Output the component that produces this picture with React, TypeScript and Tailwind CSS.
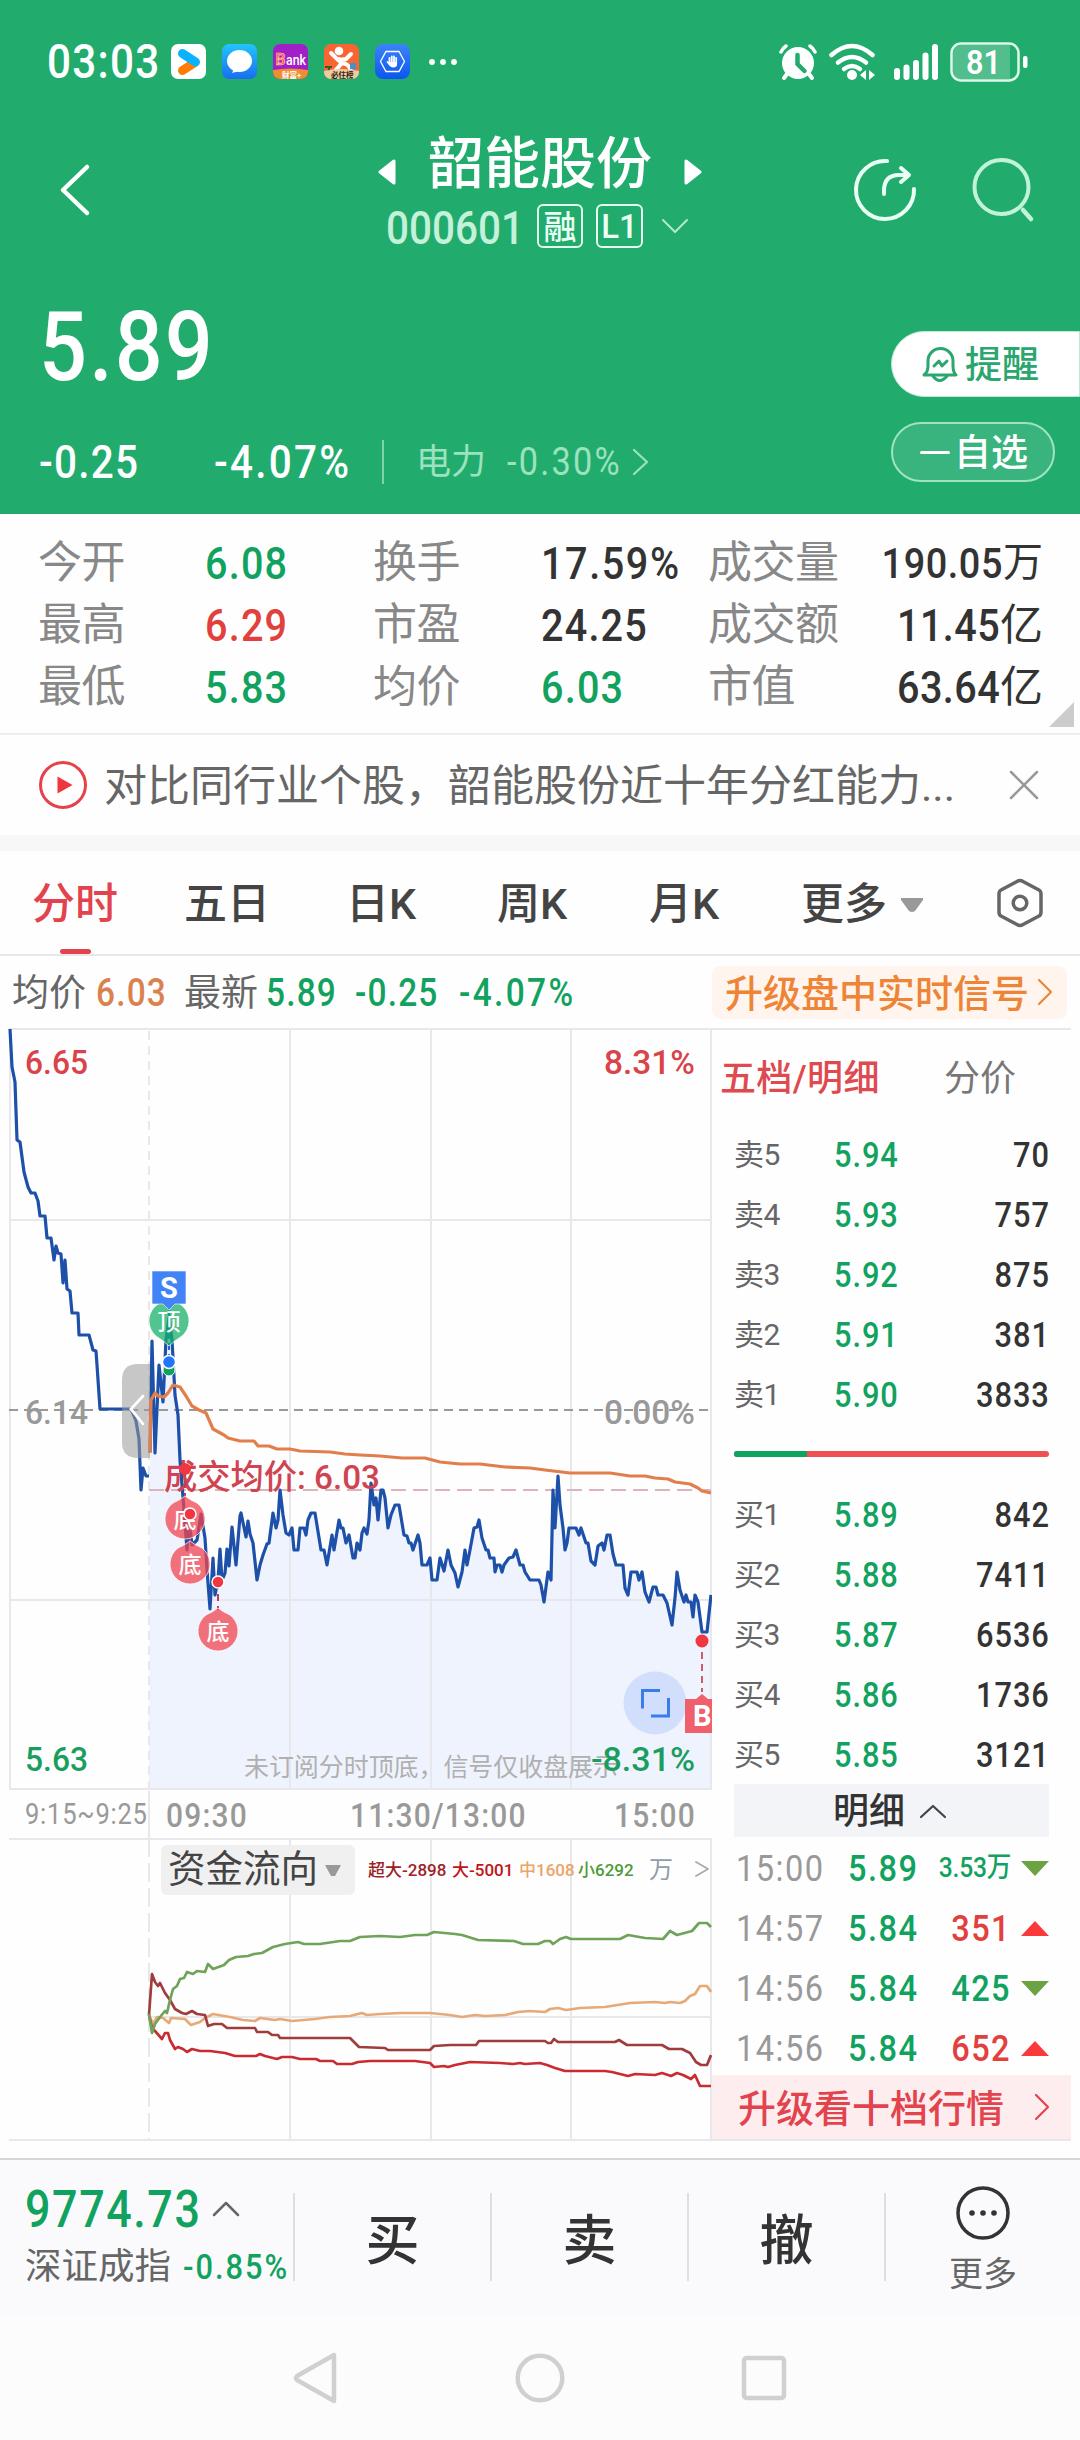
import React from "react";

const GREEN = "text-[#12a25f]";
const RED = "text-[#e2403d]";
const DARK = "text-[#333333]";

const NUM = "inline-block origin-left scale-x-[0.88] whitespace-nowrap";
const NUM_R = "inline-block origin-right scale-x-[0.88] whitespace-nowrap";

const AUCTION =
  "10,1029 12,1067 15,1082 17,1140 20,1142 24,1172 28,1187 31,1193 35,1193 38,1201 40,1216 45,1216 47,1238 51,1238 54,1260 56,1246 58,1253 61,1254 63,1283 65,1260 67,1289 70,1291 72,1313 78,1313 79,1335 89,1335 93,1350 96,1351 97,1365 100,1409 131,1409 136,1421 139,1439 141,1490 143,1468 146,1476 149,1476";

const PRICE =
  "150,1452 152,1341 155,1453 159,1365 163,1402 166,1340 169,1318 172,1340 175,1395 178,1415 180,1460 183,1497 187,1550 189,1520 192,1545 197,1540 201,1514 205,1538 207,1570 210,1609 213,1558 215,1595 218,1580 220,1549 222,1580 225,1573 227,1549 229,1566 232,1527 236,1565 240,1516 241,1513 246,1537 248,1521 250,1534 253,1543 257,1580 260,1565 263,1555 267,1544 269,1543 273,1513 276,1528 278,1520 280,1490 283,1515 286,1533 289,1535 292,1528 294,1550 298,1550 300,1528 304,1528 306,1535 308,1520 311,1513 315,1513 321,1550 324,1550 327,1565 332,1535 334,1550 339,1520 341,1528 343,1528 346,1543 349,1535 353,1558 355,1558 357,1543 360,1550 362,1533 364,1528 367,1534 369,1520 371,1483 374,1505 376,1498 378,1520 381,1490 383,1490 385,1498 388,1528 391,1515 395,1505 399,1505 404,1535 407,1536 409,1543 411,1543 413,1550 418,1535 420,1543 422,1565 427,1565 430,1558 432,1580 437,1580 440,1558 444,1571 448,1550 451,1565 455,1573 458,1587 462,1572 465,1550 467,1565 470,1550 474,1528 477,1527 479,1520 482,1538 486,1550 488,1550 490,1558 494,1558 495,1572 497,1565 500,1565 502,1572 504,1565 509,1558 513,1557 516,1550 520,1565 523,1565 525,1572 530,1580 539,1580 541,1585 544,1602 548,1572 551,1580 553,1490 555,1528 558,1476 560,1505 563,1528 565,1550 567,1543 569,1528 576,1528 579,1535 581,1528 586,1543 588,1543 591,1561 595,1565 598,1546 602,1543 604,1550 607,1535 610,1535 613,1554 616,1565 623,1565 625,1588 628,1595 631,1572 637,1572 639,1580 642,1572 645,1592 649,1602 653,1587 656,1587 658,1595 663,1595 667,1603 672,1625 675,1598 677,1572 680,1590 684,1602 686,1595 688,1602 691,1602 693,1617 695,1595 698,1602 702,1632 707,1632 711,1595";

const AVERAGE =
  "150,1453 151,1400 155,1393 158,1396 164,1397 168,1393 173,1385 180,1387 186,1396 192,1406 199,1410 206,1413 213,1429 224,1435 228,1438 240,1441 254,1441 258,1446 269,1446 277,1449 290,1449 300,1451 330,1452 345,1454 360,1455 380,1456 402,1458 425,1458 440,1462 460,1464 480,1464 505,1467 530,1468 545,1470 570,1473 610,1473 630,1476 645,1476 655,1478 668,1479 675,1482 690,1484 698,1488 702,1491 711,1493";

const FLOW_SMALL =
  "149,2014 152,2033 155,2024 160,2017 165,2011 167,2013 170,2000 173,1989 177,1986 180,1979 184,1978 187,1972 193,1974 197,1971 205,1972 208,1964 213,1969 224,1965 229,1960 236,1957 248,1956 254,1954 262,1953 273,1947 285,1944 298,1942 304,1944 320,1944 340,1941 350,1941 360,1937 380,1936 400,1937 415,1935 427,1935 434,1932 455,1934 462,1935 478,1940 514,1941 523,1944 538,1944 545,1941 550,1941 553,1944 560,1939 566,1937 571,1939 620,1939 628,1935 645,1938 663,1939 670,1931 677,1935 692,1931 699,1923 707,1923 711,1927";

const FLOW_MEDIUM =
  "149,2015 153,2024 157,2017 163,2018 169,2023 171,2018 185,2019 191,2025 200,2022 205,2018 213,2014 230,2017 243,2020 255,2021 260,2018 275,2020 280,2019 292,2021 315,2019 330,2017 350,2016 362,2013 367,2015 380,2014 400,2013 430,2013 450,2015 462,2017 475,2015 485,2016 505,2015 518,2012 530,2011 545,2012 550,2009 558,2008 566,2010 580,2008 605,2007 630,2003 655,2002 665,2003 670,2002 680,2003 685,2001 690,1996 695,1994 700,1986 707,1986 711,1992";

const FLOW_HUGE =
  "149,2015 152,1974 155,1982 158,1986 160,1983 165,1993 170,2000 175,2009 182,2013 186,2014 192,2011 197,2014 205,2015 208,2026 214,2024 222,2024 227,2028 255,2028 257,2032 268,2032 272,2035 278,2035 280,2038 350,2038 354,2042 359,2047 385,2048 388,2050 430,2050 434,2046 450,2045 476,2045 479,2041 545,2041 548,2043 551,2043 554,2039 558,2042 615,2042 619,2040 627,2045 662,2045 669,2049 682,2049 690,2053 696,2062 701,2065 707,2065 711,2055";

const FLOW_BIG =
  "149,2015 152,2028 155,2031 162,2039 165,2033 168,2033 170,2040 175,2049 178,2047 183,2049 187,2052 192,2049 200,2051 210,2051 225,2053 235,2056 256,2056 260,2054 265,2056 277,2059 282,2057 292,2057 300,2059 316,2059 320,2061 333,2061 337,2064 352,2064 358,2062 370,2061 415,2061 430,2063 434,2067 444,2066 448,2067 455,2065 470,2062 500,2063 513,2064 520,2063 525,2064 540,2063 547,2065 555,2068 565,2071 605,2071 612,2072 628,2076 635,2074 655,2075 662,2073 671,2076 677,2073 683,2075 691,2079 695,2075 700,2086 711,2086";

function Chevron({ w, h, d, stroke, sw = 2.5, className = "" }: { w: number; h: number; d: string; stroke: string; sw?: number; className?: string }) {
  return (
    <svg width={w} height={h} viewBox={`0 0 ${w} ${h}`} fill="none" className={`shrink-0 ${className}`}>
      <path d={d} stroke={stroke} strokeWidth={sw} strokeLinecap="round" strokeLinejoin="round" />
    </svg>
  );
}

function StatusBar() {
  return (
    <div className="flex h-[123px] items-center pl-[47px] pr-[52px]">
      <span className="w-[124px]">
        <span className={`${NUM} text-[48px] leading-none tracking-[0.03em]`}>03:03</span>
      </span>
      <div className="flex gap-4">
        <svg width="35" height="35" viewBox="0 0 35 35">
          <rect width="35" height="35" rx="7" fill="#fff" />
          <path d="M11.5 26.5 23 19" stroke="#ff7d05" strokeWidth="9" strokeLinecap="round" />
          <path d="M11.5 9.500 24.500 18" stroke="#0bb3fb" strokeWidth="9" strokeLinecap="round" />
        </svg>
        <svg width="35" height="35" viewBox="0 0 35 35">
          <defs>
            <linearGradient id="msg" x1="0" y1="0" x2="0" y2="1">
              <stop offset="0" stopColor="#23c5fc" />
              <stop offset="1" stopColor="#1a6df0" />
            </linearGradient>
          </defs>
          <rect width="35" height="35" rx="7" fill="url(#msg)" />
          <ellipse cx="17.500" cy="17" rx="12.500" ry="11" fill="#fff" />
          <path d="m12 25-2 4 7-2z" fill="#fff" />
        </svg>
        <svg width="35" height="35" viewBox="0 0 35 35">
          <defs>
            <clipPath id="bankclip">
              <rect width="35" height="35" rx="7" />
            </clipPath>
          </defs>
          <g clipPath="url(#bankclip)">
            <rect width="35" height="35" fill="#a01fc8" />
            <path d="M0 26q17-3 35 0v9H0z" fill="#f08c32" />
            <text x="2.500" y="21" fontSize="17" fontWeight="700" fill="#ff5a4a" stroke="#ffd2b8" strokeWidth=".6" textLength="10" lengthAdjust="spacingAndGlyphs">B</text>
            <text x="13" y="21" fontSize="14" fontWeight="500" fill="#fff" textLength="20" lengthAdjust="spacingAndGlyphs">ank</text>
            <text x="9" y="33.500" fontSize="7.500" fontWeight="700" fill="#fff">财富+</text>
          </g>
        </svg>
        <svg width="35" height="35" viewBox="0 0 35 35">
          <defs>
            <clipPath id="lifeclip">
              <rect width="35" height="35" rx="7" />
            </clipPath>
          </defs>
          <g clipPath="url(#lifeclip)">
            <rect width="35" height="35" fill="#fa6432" />
            <circle cx="15" cy="7" r="4.300" fill="#fff" />
            <path d="m7 9 7 7 8-1 5-5M15 15l2 5-6 7M17 19q8 0 10 8" stroke="#fff" strokeWidth="4" fill="none" strokeLinecap="round" />
            <rect x="26" y="19" width="6" height="6" fill="#4a90c8" />
            <path d="M1 23h7M5 23v5" stroke="#3b5a2a" strokeWidth="2" />
            <path d="M0 27q17-4 35 0v8H0z" fill="#e9cda4" />
            <text x="7" y="33.500" fontSize="7.500" fontWeight="700" fill="#3a1a10">必住榜</text>
          </g>
        </svg>
        <svg width="35" height="35" viewBox="0 0 35 35">
          <defs>
            <linearGradient id="hand" x1="0" y1="0" x2="0" y2="1">
              <stop offset="0" stopColor="#3c84f8" />
              <stop offset="1" stopColor="#0d55f0" />
            </linearGradient>
          </defs>
          <rect width="35" height="35" rx="8" fill="url(#hand)" />
          <path d="m11 7.500h13l5.500 10-5.500 10H11l-5.500-10z" fill="none" stroke="#fff" strokeWidth="1.300" />
          <path d="M14.500 14v6M16.800 12.500v8M19 12.500v8M21.200 14v6M12.500 18l3 3.500q3 2 5.500 0" stroke="#fff" strokeWidth="1.800" strokeLinecap="round" fill="none" />
          <path d="M14 18h8v3q-3 3-6 1z" fill="#fff" />
        </svg>
      </div>
      <svg width="30" height="8" viewBox="0 0 30 8" className="ml-[18px]" fill="#fff">
        <circle cx="4" cy="4" r="2.900" />
        <circle cx="15" cy="4" r="2.900" />
        <circle cx="26" cy="4" r="2.900" />
      </svg>
      <div className="ml-auto flex items-center">
        <svg width="38" height="38" viewBox="0 0 38 38" fill="none" stroke="#fff" strokeLinecap="round">
          <path d="M2 9q2-4 5-6M36 9q-2-4-5-6" strokeWidth="3.500" />
          <circle cx="19" cy="20" r="16" fill="#fff" stroke="none" />
          <path d="m8 31-3 4M30 31l3 4" strokeWidth="4" />
          <path d="M18.500 12v9l7 7" stroke="#21ac6e" strokeWidth="4.500" />
        </svg>
        <svg width="46" height="38" viewBox="0 0 46 38" fill="none" stroke="#fff" strokeLinecap="round" className="ml-[12px]">
          <path d="M2.500 12q20.500-18 41 0" strokeWidth="4.500" />
          <path d="M9 19.500q14-11 28 0" strokeWidth="4.500" />
          <path d="M15 26q8-6 16 0" strokeWidth="4.500" />
          <circle cx="23" cy="32" r="5" fill="#fff" stroke="none" />
          <path d="m31 32 6-5v10zM46 32l-6-5v10z" fill="#fff" stroke="none" />
        </svg>
        <svg width="45" height="36" viewBox="0 0 45 36" fill="#fff" className="ml-[19px]">
          <rect x="0" y="24" width="6" height="12" rx="3" />
          <rect x="9.500" y="20.500" width="6" height="15.500" rx="3" />
          <rect x="19" y="16" width="6" height="20" rx="3" />
          <rect x="28.500" y="8.500" width="6" height="27.500" rx="3" />
          <rect x="38" y="0" width="6" height="36" rx="3" />
        </svg>
        <svg width="78" height="40" viewBox="0 0 78 40" className="ml-[11px]">
          <path d="M60 3H12Q3 3 3 12v16q0 9 9 9h48z" fill="#52bd8d" />
          <rect x="1.500" y="1.500" width="67" height="37" rx="9.500" fill="none" stroke="#dff7ea" strokeWidth="2.500" />
          <rect x="73" y="14" width="4.500" height="12" rx="2" fill="#fff" />
          <text x="16" y="32" fontSize="34" fontWeight="600" fill="#fff" textLength="35" lengthAdjust="spacingAndGlyphs">81</text>
        </svg>
      </div>
    </div>
  );
}

function TitleBar() {
  return (
    <div className="flex h-[137px] items-start pl-[58px] pr-[44px]">
      <Chevron w={34} h={54} d="M29 4 5 27l24 23" stroke="#fff" sw={4.5} className="mt-[40px]" />
      <div className="ml-[286px] mt-[6px] flex w-[324px] flex-col">
        <div className="flex h-[66px] items-center justify-between">
          <svg width="18" height="26" viewBox="0 0 18 26" className="mt-[20px]">
            <path d="M16 2v22L2 13z" fill="#fff" stroke="#fff" strokeWidth="3" strokeLinejoin="round" />
          </svg>
          <h1 className="mt-[4px] text-[56px] font-medium leading-[66px] whitespace-nowrap">韶能股份</h1>
          <svg width="18" height="26" viewBox="0 0 18 26" className="mt-[20px]">
            <path d="M2 2v22l14-11z" fill="#fff" stroke="#fff" strokeWidth="3" strokeLinejoin="round" />
          </svg>
        </div>
        <div className="mt-[9px] flex h-[44px] items-center pl-[8px] text-[#ecfff5]">
          <span className="w-[151px]">
            <span className={`${NUM} mt-[4px] text-[46px] font-medium leading-none text-[#c5f0da]`}>000601</span>
          </span>
          <span className="flex h-[44px] w-[46px] items-center justify-center rounded-md border-2 border-[#e4fbef] pt-[3px] text-[33px] font-medium leading-none">融</span>
          <span className="ml-[13px] flex h-[44px] w-[47px] items-center justify-center rounded-md border-2 border-[#e4fbef] text-[33px] leading-none">L1</span>
          <Chevron w={28} h={16} d="m2 2 12 12L26 2" stroke="#b5e8cf" sw={2} className="ml-[18px]" />
        </div>
      </div>
      <div className="ml-auto mt-[34px] flex gap-[53px]">
        <svg width="66" height="66" viewBox="0 0 66 66" fill="none" stroke="#e9fff4" strokeWidth="4" strokeLinecap="round" strokeLinejoin="round">
          <path d="M34 4a29 29 0 1 0 27 28" />
          <path d="M31 37V34q0-16 15-16h9M48 11l8 7-8 7" />
        </svg>
        <svg width="64" height="66" viewBox="0 0 64 66" fill="none" stroke="#c0f3d8" strokeLinecap="round">
          <circle cx="29.500" cy="30" r="27" strokeWidth="4" />
          <path d="m51 53 8 9" strokeWidth="4.500" />
        </svg>
      </div>
    </div>
  );
}

function Header() {
  return (
    <header className="h-[514px] bg-[#21ac6e] font-medium text-white">
      <StatusBar />
      <TitleBar />
      <div className="flex h-[254px] justify-between pl-[39px]">
        <div>
          <div className="mt-[35px] h-[104px]">
            <span className={`${NUM} text-[96px] leading-[104px] tracking-[0.025em]`}>5.89</span>
          </div>
          <div className="mt-[41px] flex h-[44px] items-center leading-none">
            <span className="w-[175px]">
              <span className={`${NUM} text-[46px] tracking-[0.03em]`}>-0.25</span>
            </span>
            <span className="w-[168px]">
              <span className={`${NUM} text-[46px] tracking-[0.055em]`}>-4.07%</span>
            </span>
            <span className="h-[44px] w-[2px] bg-[#7fd3a8]" />
            <span className="ml-[32px] w-[91px] text-[35px] font-normal text-[#9ce2bf]">电力</span>
            <span className="w-[125px]">
              <span className={`${NUM} text-[39px] font-normal tracking-[0.065em] text-[#9ce2bf]`}>-0.30%</span>
            </span>
            <Chevron w={18} h={28} d="m2 2 13 12L2 26" stroke="#9ce2bf" sw={2.2} />
          </div>
        </div>
        <div className="flex w-[189px] flex-col pt-[71px]">
          <button className="flex h-[66px] items-center rounded-l-full border border-[#bfe9d3] bg-white pl-[30px] text-[36px] font-medium leading-none text-[#2ba66f]">
            <svg width="36" height="38" viewBox="0 0 36 38" fill="none" stroke="#2ba66f" strokeWidth="3" strokeLinecap="round" strokeLinejoin="round">
              <path d="M2 30q4-3 4-9v-5a12.500 12.500 0 0 1 25 0v5q0 6 3 9z" />
              <path d="M11 31q6.500 9 14 0" />
              <path d="m12 21 5-5 3 5 5-5" />
            </svg>
            <span className="ml-[7px] mt-[3px] text-[37px]">提醒</span>
          </button>
          <button className="mt-[25px] flex h-[60px] w-[164px] items-center rounded-full border-2 border-[#a0e3c2] bg-[#39b47e] pl-[27px] text-[37px] font-medium leading-none">
            <span className="h-[3px] w-[30px] rounded bg-white" />
            <span className="ml-[4px] mt-[3px]">自选</span>
          </button>
        </div>
      </div>
    </header>
  );
}

const STATS: [string, string, string, string, string, string, string, string, string][] = [
  ["今开", "6.08", GREEN, "换手", "17.59%", DARK, "成交量", "190.05", "万"],
  ["最高", "6.29", RED, "市盈", "24.25", DARK, "成交额", "11.45", "亿"],
  ["最低", "5.83", GREEN, "均价", "6.03", GREEN, "市值", "63.64", "亿"],
];

function Stats() {
  return (
    <section className="relative h-[221px] border-b-2 border-[#eeeeee] pt-[18px]">
      {STATS.map((r, i) => (
        <div key={r[0]} className="flex h-[62px] items-center pl-[38px] pr-[37px] text-[45px] font-medium leading-none tracking-[0.03em]">
          <span className="w-[167px] text-[44px] font-normal tracking-[-0.01em] text-[#888888]">{r[0]}</span>
          <span className="w-[168px]">
            <span className={`${NUM} ${r[2]}`}>{r[1]}</span>
          </span>
          <span className="w-[168px] text-[44px] font-normal tracking-[-0.01em] text-[#888888]">{r[3]}</span>
          <span className={`w-[167px] ${i === 0 ? "tracking-[0.04em]" : ""}`}>
            <span className={`${NUM} ${r[5]}`}>{r[4]}</span>
          </span>
          <span className="text-[44px] font-normal tracking-[-0.01em] text-[#888888]">{r[6]}</span>
          <span className={`ml-auto flex items-center whitespace-nowrap text-[#333333] ${i === 0 ? "text-[43px] tracking-[0.015em]" : "text-[45px] tracking-[0.01em]"}`}>
            <span className={NUM_R}>{r[7]}</span>
            <span className={`font-normal tracking-normal ${i === 0 ? "text-[40px]" : "text-[43px]"}`}>{r[8]}</span>
          </span>
        </div>
      ))}
      <svg width="25" height="25" viewBox="0 0 25 25" className="absolute bottom-[6px] right-[6px]">
        <path d="M25 0v25H0z" fill="#cccccc" />
      </svg>
    </section>
  );
}

function News() {
  return (
    <section className="flex h-[100px] items-center pl-[38px] pr-[41px]">
      <svg width="50" height="50" viewBox="0 0 50 50">
        <circle cx="25" cy="25" r="22.500" fill="none" stroke="#e5434c" strokeWidth="3" />
        <path d="M19.500 16.500v17l15-8.500z" fill="#ee3640" />
      </svg>
      <p className="ml-[16px] mt-[2px] whitespace-nowrap text-[43px] leading-none text-[#666666]">对比同行业个股，韶能股份近十年分红能力...</p>
      <Chevron w={30} h={30} d="M2 2l26 26M28 2 2 28" stroke="#999999" sw={2.5} className="ml-auto" />
    </section>
  );
}

function Tabs() {
  return (
    <nav className="relative flex h-[105px] items-center border-b-2 border-[#e8e8e8] pl-[32px] pt-[4px] text-[43px] font-medium leading-none text-[#444444]">
      <span className="w-[152px] text-[#e3434c]">分时</span>
      <span className="w-[162px]">五日</span>
      <span className="w-[151px]">日K</span>
      <span className="w-[152px]">周K</span>
      <span className="w-[152px]">月K</span>
      <span>更多</span>
      <svg width="22" height="14" viewBox="0 0 22 14" className="ml-[14px]">
        <path d="M0 0h22v2l-8 11q-3 2-6 0L0 2z" fill="#999999" />
      </svg>
      <svg width="48" height="50" viewBox="0 0 48 50" fill="none" stroke="#666666" strokeWidth="3.500" strokeLinejoin="round" className="mb-[4px] ml-[73px]">
        <path d="M21 3.500q3-2 6 0l16 8.500q2 1 2 4v18q0 3-2 4l-16 8.500q-3 2-6 0L5 38q-2-1-2-4V16q0-3 2-4z" />
        <circle cx="24" cy="25" r="6.800" />
      </svg>
      <span className="absolute bottom-0 left-[60px] h-[5px] w-[31px] rounded-full bg-[#e3434c]" />
    </nav>
  );
}

function QuoteLine() {
  return (
    <div className="flex h-[72px] items-center pl-[12px] pr-[13px] text-[38px] font-medium leading-none tracking-[0.035em]">
      <span className="mt-[2px] w-[84px] text-[37px] font-normal tracking-normal text-[#666666]">均价</span>
      <span className="mt-[2px] w-[88px]">
        <span className={`${NUM} text-[#d98250]`}>6.03</span>
      </span>
      <span className="mt-[2px] w-[82px] text-[37px] font-normal tracking-normal text-[#666666]">最新</span>
      <span className="mt-[2px] w-[89px]">
        <span className={`${NUM} ${GREEN}`}>5.89</span>
      </span>
      <span className="mt-[2px] w-[104px]">
        <span className={`${NUM} ${GREEN}`}>-0.25</span>
      </span>
      <span className="mt-[2px]">
        <span className={`${NUM} tracking-[0.07em] ${GREEN}`}>-4.07%</span>
      </span>
      <button className="ml-auto flex h-[53px] w-[355px] items-center rounded-lg bg-[#fff5ee] pl-[13px] text-[38px] font-medium leading-none tracking-normal text-[#ee8435]">
        <span className="mt-[3px] whitespace-nowrap">升级盘中实时信号</span>
        <Chevron w={18} h={28} d="m3 2 12 12L3 26" stroke="#ee8435" sw={2.2} className="ml-[7px]" />
      </button>
    </div>
  );
}

function Balloon({ x, y, up, fill, label }: { x: number; y: number; up?: boolean; fill: string; label: string }) {
  const d = up
    ? `M${x} ${y - 23}Q${x + 5} ${y - 19} ${x + 12} ${y - 16}A20 20 0 1 1 ${x - 12} ${y - 16}Q${x - 5} ${y - 19} ${x} ${y - 23}z`
    : `M${x} ${y + 25}Q${x - 5} ${y + 20} ${x - 13} ${y + 15}A20 20 0 1 1 ${x + 13} ${y + 15}Q${x + 5} ${y + 20} ${x} ${y + 25}z`;
  return (
    <g>
      <path d={d} fill={fill} fillOpacity="0.75" stroke="#fff" strokeOpacity="0.7" strokeWidth="1" />
      <text x={x} y={y + 8.5} fontSize="23" fontWeight="500" fill="#fff" textAnchor="middle">{label}</text>
    </g>
  );
}

function PriceChart() {
  return (
    <svg width="712" height="763" viewBox="0 1028 712 763" className="block">
      <polygon points={`149,1789 ${PRICE} 711,1789`} fill="#eff3fd" />
      <g stroke="#e8e8ec" strokeWidth="2" fill="none">
        <path d="M9 1029H712M10 1220H712M10 1600H712M9 1789H712M10 1029V1790M290 1029V1789M431 1029V1789M571 1029V1789M711 1029V1789" />
        <path d="M149 1031V1789" strokeDasharray="9 6" />
      </g>
      <path d="M9 1410H711" stroke="#999999" strokeWidth="2" strokeDasharray="9 6" />
      <path d="M149 1490H711" stroke="#dcb4ba" strokeWidth="2" strokeDasharray="15 7" />
      <polyline points={AUCTION} fill="none" stroke="#1d50a8" strokeWidth="3.200" strokeLinejoin="round" />
      <polyline points={PRICE} fill="none" stroke="#1d50a8" strokeWidth="3.200" strokeLinejoin="round" />
      <path d="M150 1364h-12q-16 0-16 16v62q0 16 16 16h12z" fill="#999999" fillOpacity="0.55" />
      <path d="m143 1396-12 13 12 15" fill="none" stroke="#fff" strokeWidth="2.800" strokeLinecap="round" />
      <polyline points={AVERAGE} fill="none" stroke="#e27d4c" strokeWidth="3.200" strokeLinejoin="round" />

      <g fontSize="34" fontWeight="500">
        <text x="25" y="1073.500" fill="#d9434a" textLength="63" lengthAdjust="spacingAndGlyphs">6.65</text>
        <text x="604" y="1073.500" fill="#d9434a" textLength="91" lengthAdjust="spacingAndGlyphs">8.31%</text>
        <text x="25" y="1424" fill="#999999" textLength="63" lengthAdjust="spacingAndGlyphs">6.14</text>
        <text x="604" y="1424" fill="#999999" textLength="91" lengthAdjust="spacingAndGlyphs">0.00%</text>
        <text x="25" y="1771" fill="#1a9e5f" textLength="63" lengthAdjust="spacingAndGlyphs">5.63</text>
      </g>
      <text x="244" y="1775.500" fontSize="25" fill="#b0b0b0" textLength="374">未订阅分时顶底，信号仅收盘展示</text>
      <text x="591" y="1771" fontSize="34" fontWeight="500" fill="#1a9e5f" textLength="104" lengthAdjust="spacingAndGlyphs">-8.31%</text>
      <text x="164" y="1488.500" fontSize="34" fontWeight="500" fill="#cf4450" textLength="216" lengthAdjust="spacingAndGlyphs">成交均价: 6.03</text>

      <path d="M169 1310v54" stroke="#1a63d8" strokeWidth="2" strokeDasharray="7 4" />
      <circle cx="169" cy="1370" r="6" fill="#12a25f" stroke="#fff" strokeWidth="1" />
      <Balloon x={169} y={1321} fill="#17b06a" label="顶" />
      <path d="M152 1271h34v33h-11l-6 6-6-6h-11z" fill="#4284f8" stroke="#fff" strokeOpacity="0.600" strokeWidth="1" />
      <text x="169" y="1298" fontSize="29" fontWeight="700" fill="#fff" textAnchor="middle">S</text>
      <circle cx="169" cy="1362" r="6.500" fill="#2176f5" stroke="#fff" strokeWidth="1.500" />

      <path d="M185 1469v28M190 1514v28M218 1582v28" stroke="#b3405e" strokeWidth="2" strokeDasharray="7 5" />
      <circle cx="185" cy="1469" r="6" fill="#f03640" />
      <Balloon x={185} y={1519} up fill="#f04450" label="底" />
      <circle cx="190" cy="1514" r="6" fill="#f03640" stroke="#fff" strokeWidth="1.500" />
      <Balloon x={190} y={1564} up fill="#f04450" label="底" />
      <Balloon x={218} y={1631} up fill="#f04450" label="底" />
      <circle cx="218" cy="1582" r="6" fill="#f03640" stroke="#fff" strokeWidth="1.500" />

      <circle cx="655" cy="1703" r="31.500" fill="#d1dffc" />
      <path d="M660 1690.500h-17.500v18M651 1716h17.500v-18" fill="none" stroke="#3a7cec" strokeWidth="3" />
      <circle cx="702" cy="1641" r="6.500" fill="#f03640" />
      <path d="M702 1652v40" stroke="#cc5c6c" strokeWidth="2" strokeDasharray="7 5" />
      <path d="M712 1699h-4l-6-5-6 5h-11v34h27z" fill="#f0606c" />
      <text x="693" y="1726" fontSize="29" fontWeight="700" fill="#fff">B</text>
    </svg>
  );
}

function FlowChart() {
  const lines: [string, string][] = [
    [FLOW_MEDIUM, "#e8a978"],
    [FLOW_HUGE, "#a03c3c"],
    [FLOW_BIG, "#c92c30"],
    [FLOW_SMALL, "#6fa359"],
  ];
  return (
    <div className="relative h-[302px]">
      <svg width="712" height="303" viewBox="0 1838 712 303" className="absolute left-0 top-0">
        <g stroke="#e8e8ec" strokeWidth="2" fill="none">
          <path d="M9 1839H712M149 2017H712M9 2140H712M290 1839V2140M431 1839V2140M571 1839V2140M711 1839V2140" />
          <path d="M149 1838V2140" strokeDasharray="19 6" />
        </g>
        {lines.map(([points, color]) => (
          <polyline key={color} points={points} fill="none" stroke={color} strokeWidth="2.700" strokeLinejoin="round" />
        ))}
      </svg>
      <div className="relative flex items-center pl-[161px] pt-[7px] text-[17px] font-medium leading-none">
        <button className="flex h-[50px] w-[194px] items-center rounded-md bg-[#f0f0f0] pl-[7px] text-[37.500px] font-normal leading-none text-[#444444]">
          资金流向
          <svg width="16" height="12" viewBox="0 0 16 12" className="ml-[7px] mt-[2px]">
            <path d="M0 0h16L10 11H6z" fill="#999999" />
          </svg>
        </button>
        <span className="ml-[13px] w-[84px] whitespace-nowrap text-[#9c2226]">超大-2898</span>
        <span className="w-[67px] whitespace-nowrap text-[#c01418]">大-5001</span>
        <span className="w-[59px] whitespace-nowrap text-[#eba468]">中1608</span>
        <span className="w-[71px] whitespace-nowrap text-[#4f9a36]">小6292</span>
        <span className="text-[24px] font-normal text-[#8c9eaf]">万</span>
        <Chevron w={16} h={18} d="M2 2 14 9 2 16" stroke="#aaaaaa" sw={1.8} className="mb-[3px] ml-[21px]" />
      </div>
    </div>
  );
}

const ASKS: [string, string, string][] = [
  ["卖5", "5.94", "70"],
  ["卖4", "5.93", "757"],
  ["卖3", "5.92", "875"],
  ["卖2", "5.91", "381"],
  ["卖1", "5.90", "3833"],
];
const BIDS: [string, string, string][] = [
  ["买1", "5.89", "842"],
  ["买2", "5.88", "7411"],
  ["买3", "5.87", "6536"],
  ["买4", "5.86", "1736"],
  ["买5", "5.85", "3121"],
];
const TICKS: [string, string, string, boolean][] = [
  ["15:00", "5.89", "3.53万", false],
  ["14:57", "5.84", "351", true],
  ["14:56", "5.84", "425", false],
  ["14:56", "5.84", "652", true],
];

function Level({ row }: { row: [string, string, string] }) {
  return (
    <div className="flex h-[60px] items-center pl-[22px] pr-[21px] text-[35px] font-medium leading-none tracking-[0.03em]">
      <span className="w-[100px] text-[30px] font-normal tracking-[-0.02em] text-[#666666]">{row[0]}</span>
      <span className={`${NUM} ${GREEN}`}>{row[1]}</span>
      <span className={`${NUM_R} ml-auto text-[#333333]`}>{row[2]}</span>
    </div>
  );
}

function OrderBook() {
  return (
    <aside className="flex h-[1113px] w-[359px] flex-col border-b-2 border-t-2 border-[#e8e8ec]">
      <div className="flex h-[95px] shrink-0 items-center pl-[8px] pt-[2px] text-[36px] leading-none">
        <span className="w-[224px] whitespace-nowrap font-medium tracking-[0.01em] text-[#de4a50]">五档/明细</span>
        <span className="text-[#777777]">分价</span>
      </div>
      <div className="shrink-0">
        {ASKS.map((r) => (
          <Level key={r[0]} row={r} />
        ))}
      </div>
      <div className="mx-[22px] mb-[28px] mt-[26px] flex h-[6px] shrink-0 overflow-hidden rounded-full bg-[#f05054]">
        <span className="w-[73px] bg-[#12a25f]" />
      </div>
      <div className="shrink-0">
        {BIDS.map((r) => (
          <Level key={r[0]} row={r} />
        ))}
      </div>
      <div className="mx-[22px] mt-[-1px] flex h-[53px] shrink-0 items-center bg-[#f3f4f8] pl-[99px] text-[36px] font-medium leading-none text-[#333333]">
        <span className="mt-[3px]">明细</span>
        <Chevron w={28} h={16} d="M2 14 14 3l12 11" stroke="#444444" sw={2.2} className="ml-[14px]" />
      </div>
      <div className="mt-[1px] shrink-0">
        {TICKS.map((t, i) => (
          <div key={i} className="flex h-[60px] items-center pl-[24px] pr-[22px] text-[37px] font-medium leading-none tracking-[0.045em]">
            <span className="w-[112px]">
              <span className={`${NUM} font-normal text-[#999999]`}>{t[0]}</span>
            </span>
            <span className={`${NUM} ${GREEN}`}>{t[1]}</span>
            <span className={`${NUM_R} ml-auto ${i === 0 ? "text-[28px] tracking-[-0.01em]" : ""} ${t[3] ? RED : GREEN}`}>{t[2]}</span>
            <svg width="28" height="15" viewBox="0 0 28 15" className="ml-[10px]">
              <path d={t[3] ? "M0 15h28L14 0z" : "M0 0h28L14 15z"} fill={t[3] ? "#fa3a3a" : "#6ba342"} />
            </svg>
          </div>
        ))}
      </div>
      <div className="mt-[-3px] flex h-[64px] shrink-0 items-center bg-[#feedef] pl-[26px] text-[38px] font-medium leading-none text-[#e3434c]">
        <span className="mt-[3px] whitespace-nowrap">升级看十档行情</span>
        <Chevron w={18} h={28} d="m3 2 12 12L3 26" stroke="#e3434c" sw={2.2} className="ml-[29px]" />
      </div>
    </aside>
  );
}

function BottomBar() {
  return (
    <footer>
      <div className="flex h-[158px] border-t-2 border-[#d6d6d8] bg-[#fafafc] leading-none">
        <div className="w-[293px] pl-[25px] pt-[23px]">
          <div className="flex h-[52px] items-center">
            <span className="w-[187px]">
              <span className={`${NUM} text-[51px] font-medium tracking-[0.035em] ${GREEN}`}>9774.73</span>
            </span>
            <Chevron w={28} h={16} d="M2 14 14 2l12 12" stroke="#666666" sw={2.5} />
          </div>
          <div className="mt-[11px] flex h-[42px] items-center whitespace-nowrap">
            <span className="w-[157px] shrink-0 text-[36.500px] text-[#666666]">深证成指</span>
            <span className={`${NUM} ml-[1px] text-[35px] font-medium tracking-[0.065em] ${GREEN}`}>-0.85%</span>
          </div>
        </div>
        {["买", "卖", "撤"].map((label) => (
          <React.Fragment key={label}>
            <span className="mt-[33px] h-[88px] w-[2px] bg-[#dedee2]" />
            <button className="w-[195px] pt-[7px] text-[54px] font-medium leading-none text-[#333333]">{label}</button>
          </React.Fragment>
        ))}
        <span className="mt-[33px] h-[88px] w-[2px] bg-[#dedee2]" />
        <div className="flex flex-1 flex-col items-center pt-[26px] text-[34px] text-[#666666]">
          <svg width="54" height="54" viewBox="0 0 54 54" fill="#333">
            <circle cx="27" cy="27" r="25" fill="none" stroke="#333333" strokeWidth="3.500" />
            <circle cx="16" cy="27" r="2.800" />
            <circle cx="27" cy="27" r="2.800" />
            <circle cx="38" cy="27" r="2.800" />
          </svg>
          <span className="mt-[17px]">更多</span>
        </div>
      </div>
      <div className="flex h-[124px] items-center justify-between bg-[#fcfcfc] pl-[292px] pr-[293px]">
        <svg width="46" height="54" viewBox="0 0 46 54" fill="none" stroke="#d0d0d0" strokeWidth="4.500" strokeLinejoin="round">
          <path d="M42 4v46L5 29q-2-2 0-4z" />
        </svg>
        <svg width="52" height="52" viewBox="0 0 52 52" fill="none" stroke="#d0d0d0" strokeWidth="4.500">
          <circle cx="26" cy="26" r="22.300" />
        </svg>
        <svg width="46" height="46" viewBox="0 0 46 46" fill="none" stroke="#d0d0d0" strokeWidth="4.500">
          <rect x="3" y="3" width="40" height="40" rx="2.500" />
        </svg>
      </div>
    </footer>
  );
}

export default function App() {
  return (
    <div className="flex h-[2440px] w-[1080px] flex-col overflow-hidden bg-[#fefefe] font-['Roboto','Noto_Sans_CJK_SC',sans-serif]">
      <Header />
      <Stats />
      <News />
      <div className="h-[16px] bg-[#f7f7f7]" />
      <Tabs />
      <QuoteLine />
      <main className="flex h-[1112px]">
        <div className="w-[712px]">
          <PriceChart />
          <div className="flex h-[47px] items-center pl-[25px] text-[34px] font-medium leading-none tracking-[0.04em] text-[#999999]">
            <span className="flex h-[47px] w-[125px] items-center border-r-2 border-[#e8e8ec]">
              <span className={`${NUM} text-[29px] font-normal tracking-[0.03em]`}>9:15~9:25</span>
            </span>
            <span className="ml-[16px] w-[184px]">
              <span className={NUM}>09:30</span>
            </span>
            <span className="w-[264px]">
              <span className={NUM}>11:30/13:00</span>
            </span>
            <span>
              <span className={NUM}>15:00</span>
            </span>
          </div>
          <FlowChart />
        </div>
        <OrderBook />
      </main>
      <div className="h-[18px]" />
      <BottomBar />
    </div>
  );
}
